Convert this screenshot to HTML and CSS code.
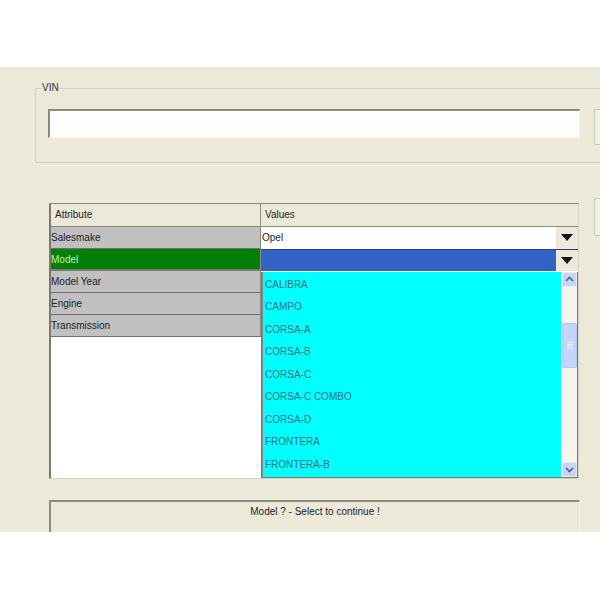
FILE: index.html
```html
<!DOCTYPE html>
<html lang="en">
<head>
    <meta charset="UTF-8">
    <title>Vehicle Selection</title>
    <link rel="stylesheet" href="styles.css">
</head>
<body>
    <div class="window">
        <fieldset class="vin-group">
            <legend>VIN</legend>
            <div class="vin-row">
                <div class="vin-input"></div>
                <div class="side-button"></div>
            </div>
        </fieldset>

        <div class="table-row">
            <div class="grid">
                <div class="col attr-col">
                    <div class="head">Attribute</div>
                    <div class="cell">Salesmake</div>
                    <div class="cell selected">Model</div>
                    <div class="cell">Model Year</div>
                    <div class="cell">Engine</div>
                    <div class="cell">Transmission</div>
                </div>
                <div class="col value-col">
                    <div class="head">Values</div>
                    <div class="combo">
                        <span class="combo-text">Opel</span>
                        <span class="combo-arrow"></span>
                    </div>
                    <div class="combo active">
                        <span class="combo-text"></span>
                        <span class="combo-arrow"></span>
                    </div>
                    <div class="popup">
                        <ul class="list">
                            <li>CALIBRA</li>
                            <li>CAMPO</li>
                            <li>CORSA-A</li>
                            <li>CORSA-B</li>
                            <li>CORSA-C</li>
                            <li>CORSA-C COMBO</li>
                            <li>CORSA-D</li>
                            <li>FRONTERA</li>
                            <li>FRONTERA-B</li>
                        </ul>
                        <div class="scrollbar">
                            <div class="scroll-btn up">
                                <svg width="9" height="6" viewBox="0 0 9 6"><path d="M1 5 L4.5 1.5 L8 5" fill="none" stroke="#4d6185" stroke-width="1.6"/></svg>
                            </div>
                            <div class="track">
                                <div class="thumb"><span></span><span></span><span></span><span></span></div>
                            </div>
                            <div class="scroll-btn down">
                                <svg width="9" height="6" viewBox="0 0 9 6"><path d="M1 1 L4.5 4.5 L8 1" fill="none" stroke="#4d6185" stroke-width="1.6"/></svg>
                            </div>
                        </div>
                    </div>
                </div>
            </div>
            <div class="side-button tall"></div>
        </div>

        <div class="status">Model ? - Select to continue !</div>
    </div>
</body>
</html>
```

FILE: styles.css
```css
body {
    margin: 0;
    background: #fff;
    font-family: "Liberation Sans", Arial, sans-serif;
    font-size: 10px;
    color: #222;
    overflow: hidden;
}

.window {
    margin-top: 67px;
    height: 465px;
    background: #ece9d8;
    padding-top: 15px;
    box-sizing: border-box;
    overflow: hidden;
}

/* VIN group box */
.vin-group {
    margin: 0 -30px 0 35px;
    padding: 0 0 17px 12px;
    border: 1px solid #d0cdbd;
    border-radius: 2px;
}

.vin-group legend {
    padding: 0 1px;
    margin-left: -7px;
    font-size: 10px;
    line-height: 12px;
    color: #333;
}

.vin-row {
    display: flex;
    gap: 14px;
    margin-top: 15px;
}

.vin-input {
    width: 532px;
    height: 29px;
    flex-shrink: 0;
    box-sizing: border-box;
    background: #fdfdfb;
    border-top: 2px solid #8c8a7e;
    border-left: 2px solid #8c8a7e;
    border-right: 1px solid #f4f3ee;
    border-bottom: 1px solid #f4f3ee;
}

.side-button {
    width: 20px;
    height: 36px;
    flex-shrink: 0;
    box-sizing: border-box;
    border: 1px solid #c9c6b6;
    border-right: none;
    background: #f1efe4;
    border-radius: 2px 0 0 2px;
}

.side-button.tall {
    margin-top: -5px;
    height: 38px;
}

/* attribute / value table */
.table-row {
    display: flex;
    gap: 15px;
    margin: 40px 0 0 49px;
    align-items: flex-start;
}

.grid {
    width: 530px;
    height: 276px;
    flex-shrink: 0;
    box-sizing: border-box;
    display: flex;
    background: #fff;
    border-top: 1px solid #8d8b80;
    border-left: 2px solid #7b7a72;
    border-right: 1px solid #d6d3c6;
    border-bottom: 1px solid #d6d3c6;
}

.col {
    display: flex;
    flex-direction: column;
}

.attr-col {
    width: 210px;
}

.value-col {
    flex: 1;
}

.head {
    height: 22px;
    line-height: 22px;
    padding-left: 4px;
    background: #ece9d8;
    border-bottom: 1px solid #8d8b80;
    border-right: 1px solid #8d8b80;
    color: #222;
}

.value-col .head {
    border-right: none;
}

.cell {
    height: 21px;
    line-height: 21px;
    background: #c0c0c0;
    border-bottom: 1px solid #6f6f6f;
    border-right: 1px solid #8d8b80;
    color: #222;
}

.cell.selected {
    background: #038003;
    color: #b8f5b8;
    border-bottom: 2px solid #7a7a7a;
    height: 20px;
    line-height: 21px;
}

.combo {
    display: flex;
    height: 22px;
    box-sizing: border-box;
    background: #fff;
}

.combo.active {
    background: #3163c4;
    border-top: 1px solid #233f80;
}

.combo-text {
    flex: 1;
    line-height: 21px;
    padding-left: 1px;
}

.combo-arrow {
    width: 22px;
    background: #ece9d8;
    display: flex;
    align-items: center;
    justify-content: center;
}

.combo-arrow::before {
    content: "";
    border-left: 6px solid transparent;
    border-right: 6px solid transparent;
    border-top: 7px solid #111;
}

/* dropdown popup */
.popup {
    display: flex;
    height: 207px;
    margin-top: 1px;
    border: 1px solid #7d7c72;
    border-top: none;
    background: #fff;
}

.list {
    flex: 1;
    margin: 0;
    padding: 2px 0 0;
    list-style: none;
    background: #00ffff;
    border-left: 1px solid #7a8a8a;
}

.list li {
    height: 22.5px;
    line-height: 22.5px;
    padding-left: 2px;
    color: #2a7585;
}

.scrollbar {
    width: 15px;
    margin-left: 1px;
    display: flex;
    flex-direction: column;
    background: #f5f4ee;
}

.scroll-btn {
    height: 15px;
    background: #c6d5f6;
    border: 1px solid #e4ebfb;
    box-sizing: border-box;
    border-radius: 2px;
    display: flex;
    align-items: center;
    justify-content: center;
}

.track {
    flex: 1;
    padding-top: 36px;
}

.thumb {
    height: 45px;
    background: #c4d4fa;
    border: 1px solid #b4c6f0;
    box-sizing: border-box;
    border-radius: 2px;
    display: flex;
    flex-direction: column;
    align-items: center;
    justify-content: center;
    gap: 1px;
}

.thumb span {
    width: 6px;
    height: 1px;
    background: #eef2fd;
}

/* status panel */
.status {
    margin: 21px 20px 0 49px;
    height: 60px;
    border-top: 2px solid #8d8b80;
    border-left: 2px solid #8d8b80;
    border-right: 1px solid #f4f3ee;
    text-align: center;
    padding-top: 4px;
    font-size: 10px;
    color: #222;
}
```
